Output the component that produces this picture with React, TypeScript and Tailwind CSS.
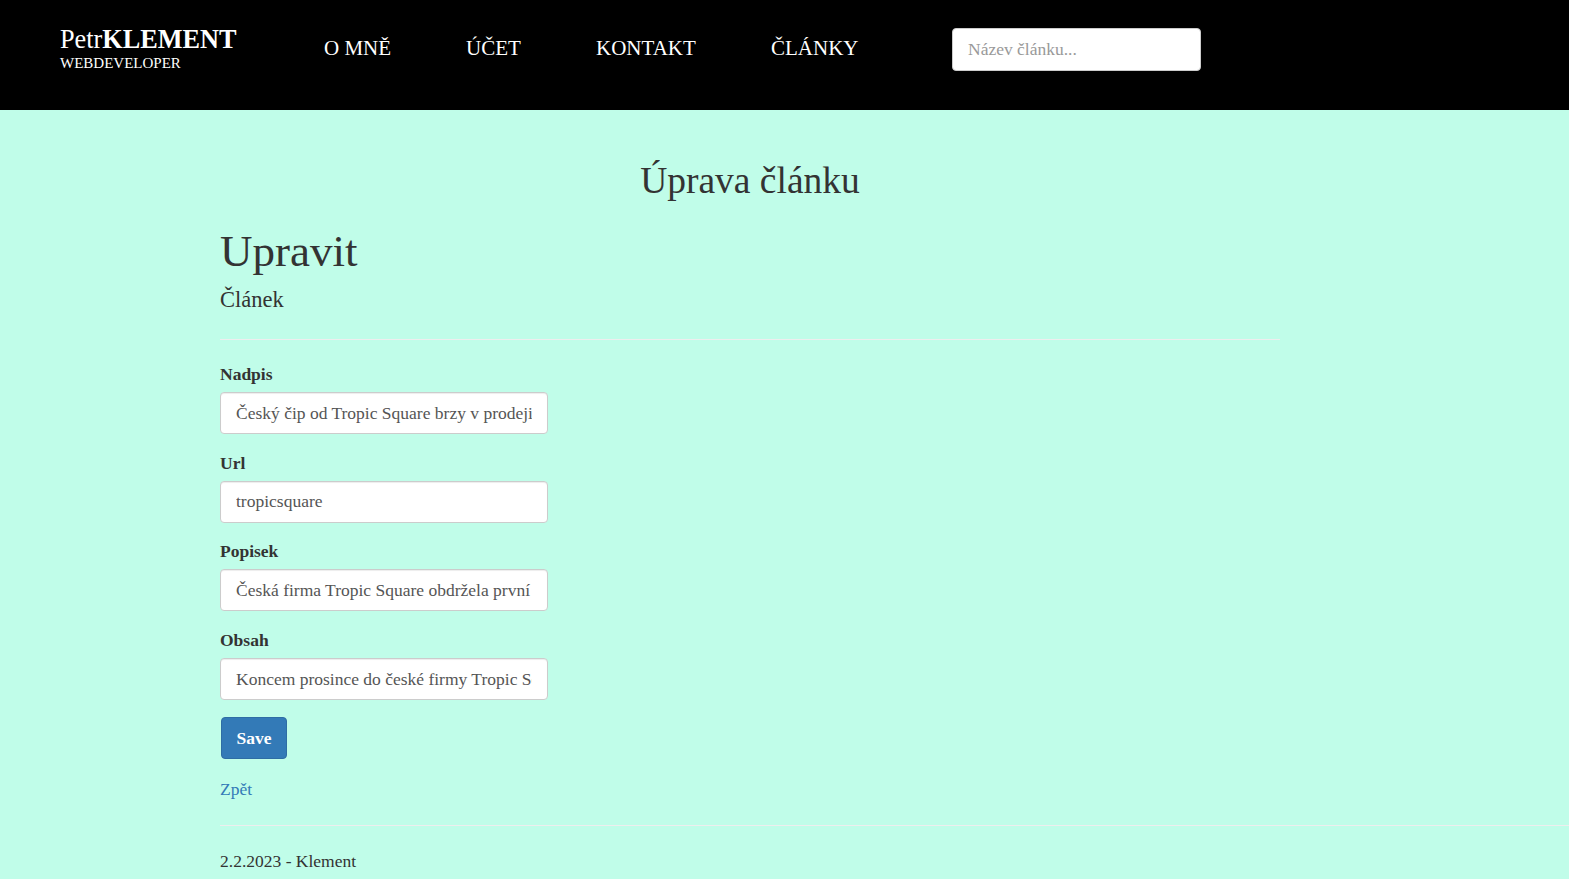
import React from "react";

const serif = { fontFamily: '"Liberation Serif", "Times New Roman", serif' };

function Field({ label, value }: { label: string; value: string }) {
  return (
    <div className="mb-[16.7px]">
      <label className="block font-bold text-[17.5px] leading-[24px] mb-[6px] text-[#333]">{label}</label>
      <input
        readOnly
        value={value}
        className="block w-[328px] h-[42px] px-[15px] bg-white border border-[#ccc] rounded-[4px] shadow-[inset_0_1px_1px_rgba(0,0,0,0.075)] text-[17.5px] text-[#555] outline-none"
        style={serif}
      />
    </div>
  );
}

export default function App() {
  return (
    <div className="min-h-[879px] bg-[#c0fde9] text-[#333]" style={serif}>
      <header className="h-[110px] bg-black flex items-center pb-[11px]">
        <div className="ml-[60px] w-[264px] text-white mb-[3px]">
          <div className="text-[26.25px] leading-[28px]">
            Petr<span className="font-bold">KLEMENT</span>
          </div>
          <div className="text-[15px] leading-[16px] mt-[1px]">WEBDEVELOPER</div>
        </div>
        <nav className="flex text-white text-[21px] mt-[-1px]">
          <span className="w-[142px]">O MNĚ</span>
          <span className="w-[130px]">ÚČET</span>
          <span className="w-[175px]">KONTAKT</span>
          <span className="w-[181px]">ČLÁNKY</span>
        </nav>
        <input
          readOnly
          placeholder="Název článku..."
          className="w-[249px] h-[43px] px-[15px] bg-white rounded-[4px] border border-[#ccc] text-[17.5px] text-[#555] placeholder:text-[#999] outline-none"
          style={serif}
        />
      </header>

      <main className="pt-[50px]">
        <div className="w-[1060px] ml-[220px]">
          <h2 className="text-center text-[37.5px] leading-[42px]">Úprava článku</h2>
          <h1 className="text-[45px] leading-[52px] mt-[23px]">Upravit</h1>
          <h4 className="text-[22.5px] leading-[28px] mt-[9px]">Článek</h4>
          <hr className="mt-[25px] mb-[22px] border-t border-[#eee]" />
          <Field label="Nadpis" value="Český čip od Tropic Square brzy v prodeji" />
          <Field label="Url" value="tropicsquare" />
          <Field label="Popisek" value="Česká firma Tropic Square obdržela první dávku" />
          <Field label="Obsah" value="Koncem prosince do české firmy Tropic Square dorazila" />
          <button className="block mt-[2px] ml-[1px] w-[66px] h-[42px] bg-[#337ab7] border border-[#2e6da4] rounded-[4px] text-white font-bold text-[17.5px]" style={serif}>
            Save
          </button>
          <div className="mt-[18px] text-[17.5px] leading-[24px]">
            <a className="text-[#337ab7]">Zpět</a>
          </div>
        </div>
        <hr className="ml-[220px] mt-[24px] border-t border-[#eee]" />
        <div className="ml-[220px] mt-[23px] text-[17.5px] leading-[24px]">2.2.2023 - Klement</div>
      </main>
    </div>
  );
}
